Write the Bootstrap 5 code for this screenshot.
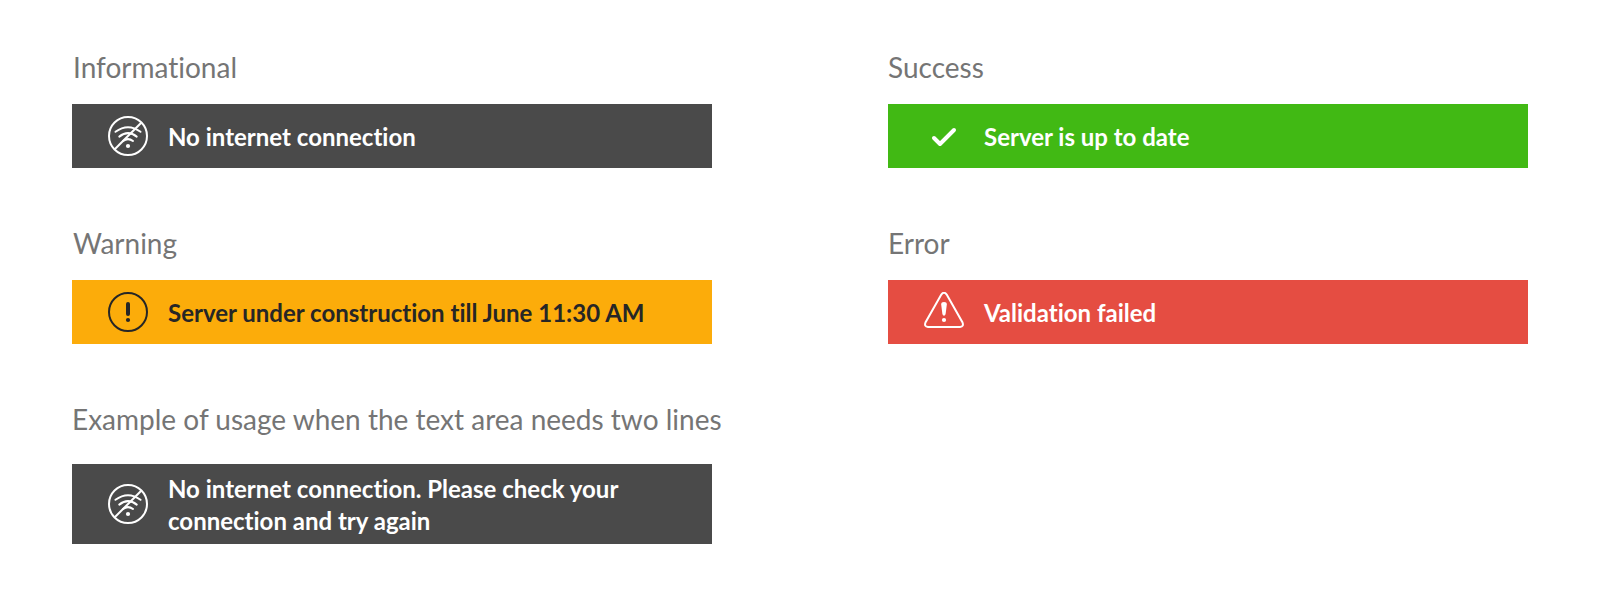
<!DOCTYPE html>
<html lang="en">
<head>
<meta charset="utf-8">
<meta name="viewport" content="width=device-width, initial-scale=1">
<title>Notification bars</title>
<link href="https://cdn.jsdelivr.net/npm/bootstrap@5.3.0/dist/css/bootstrap.min.css" rel="stylesheet">
<style>
  body { font-family: Lato, sans-serif; font-variant-ligatures: none; background: #fff; }
  .board { padding: 49px 72px 0; display: grid; grid-template-columns: 640px 640px; column-gap: 176px; row-gap: 57px; }
  .board h2 { font-size: 28px; line-height: 36px; font-weight: 400; color: #757575; margin: 0 0 19px; white-space: nowrap; }
  .board .inset-title { padding-left: 1px; }
  .board .two-line h2 { margin-bottom: 27px; }
  .notice { height: 64px; padding: 0 36px; gap: 20px; color: #fff; font-size: 24px; line-height: 32px; font-weight: 700; }
  .two-line .notice { height: 80px; }
  .notice svg { width: 40px; height: 40px; flex: none; }
  .notice p { margin: 0; padding-top: 2px; }
  .notice-info { background: #4a4a4a; }
  .notice-success { background: #41b914; }
  .notice-warning { background: #fcac0a; color: #262626; }
  .notice-error { background: #e54d42; }
</style>
</head>
<body>
<svg class="d-none" aria-hidden="true">
  <symbol id="no-wifi" viewBox="0 0 40 40">
    <g fill="none" stroke="currentColor" stroke-width="2" stroke-linecap="round">
      <circle cx="20" cy="20" r="19"/>
      <path d="M6.5 33.5 33.7 6.3" stroke-linecap="butt"/>
      <path d="M7.5 15.8Q20 6.6 32.5 15.8M11.3 20.6Q20 13.6 28.7 20.6M15 25Q20 21.2 25 25"/>
    </g>
    <circle cx="20" cy="30" r="2.1" fill="currentColor"/>
  </symbol>
</svg>
<main class="board">
  <section>
    <h2 class="inset-title">Informational</h2>
    <div class="notice notice-info d-flex align-items-center" role="status">
      <svg><use href="#no-wifi"/></svg>
      <p>No internet connection</p>
    </div>
  </section>
  <section>
    <h2>Success</h2>
    <div class="notice notice-success d-flex align-items-center" role="status">
      <svg viewBox="0 0 40 40" fill="none" stroke="currentColor" stroke-width="4" stroke-linecap="round" stroke-linejoin="round"><path d="M10 22 16 28 30 14"/></svg>
      <p>Server is up to date</p>
    </div>
  </section>
  <section>
    <h2 class="inset-title">Warning</h2>
    <div class="notice notice-warning d-flex align-items-center" role="alert">
      <svg viewBox="0 0 40 40" fill="none" stroke="currentColor" stroke-linecap="round"><circle cx="20" cy="20" r="19" stroke-width="2"/><path d="M20 12v10" stroke-width="4"/><circle cx="20" cy="28" r="2.1" fill="currentColor" stroke="none"/></svg>
      <p>Server under construction till June 11:30 AM</p>
    </div>
  </section>
  <section>
    <h2>Error</h2>
    <div class="notice notice-error d-flex align-items-center" role="alert">
      <svg viewBox="0 0 40 40" fill="none" stroke="currentColor" stroke-width="2"><path d="M17.3 2.6Q20 -1.2 22.7 2.6L38.4 30.2Q40.2 34.7 36 35H4Q-.2 34.7 1.6 30.2Z"/><path d="M17.2 12.4Q17.2 10 20 10T22.8 12.4L21.6 22Q21.2 23.8 20 23.8T18.4 22Z" fill="currentColor" stroke="none"/><circle cx="20" cy="28" r="2.1" fill="currentColor" stroke="none"/></svg>
      <p>Validation failed</p>
    </div>
  </section>
  <section class="two-line">
    <h2>Example of usage when the text area needs two lines</h2>
    <div class="notice notice-info d-flex align-items-center" role="status">
      <svg><use href="#no-wifi"/></svg>
      <p>No internet connection. Please check your connection and try again</p>
    </div>
  </section>
</main>
<script src="https://cdn.jsdelivr.net/npm/bootstrap@5.3.0/dist/js/bootstrap.bundle.min.js"></script>
</body>
</html>
